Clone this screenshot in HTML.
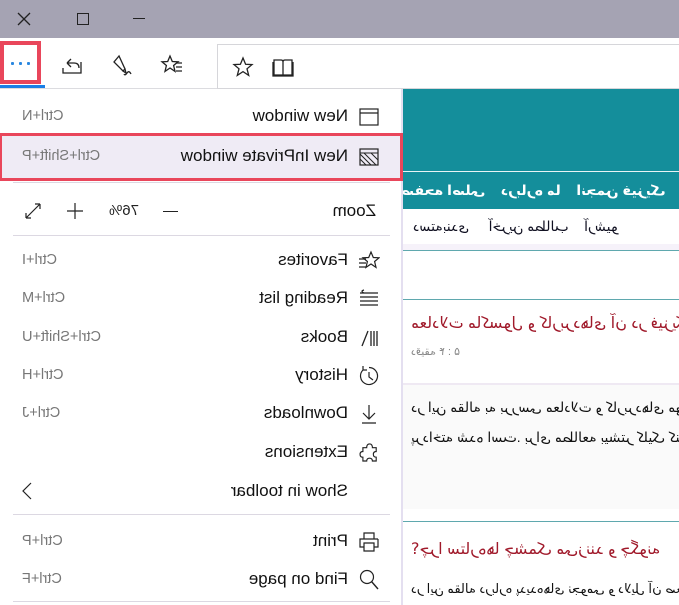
<!DOCTYPE html>
<html><head><meta charset="utf-8">
<style>
*{margin:0;padding:0;box-sizing:border-box}
html,body{width:679px;height:605px;overflow:hidden;background:#fff}
#w{position:absolute;left:0;top:0;width:679px;height:605px;transform:scaleX(-1);overflow:hidden;font-family:"Liberation Sans","DejaVu Sans",sans-serif}
.abs{position:absolute}
#title{left:0;top:0;width:679px;height:38px;background:#a5a3b3}
#tb{left:0;top:38px;width:679px;height:51px;background:#fff;border-bottom:1px solid #dcdce0}
#addr{left:0;top:44px;width:462px;height:45px;border:1px solid #d6d6da;border-left:none;background:#fff}
#content{left:0;top:89px;width:276px;height:516px;background:#fff;overflow:hidden}
#menu{left:276px;top:89px;width:403px;height:516px;background:#fff;border-left:2px solid #e4dff0}
.item{position:absolute;left:0;width:401px;height:38px}
.item .t{position:absolute;left:53px;top:10px;font-size:17px;color:#111}
.item .k{position:absolute;right:22px;top:12px;font-size:14.5px;color:#777}
.item svg{position:absolute;left:21px;top:10px}
.sep{position:absolute;left:11px;width:377px;height:1px;background:#dcd8e2}
.ar{font-family:"Liberation Sans","DejaVu Sans",sans-serif;direction:rtl;white-space:nowrap;position:absolute;right:6px}
</style></head><body>
<div id="w">
 <div id="title" class="abs">
  <div class="abs" style="left:534px;top:18px;width:12px;height:1px;background:#222"></div>
  <div class="abs" style="left:590px;top:13px;width:12px;height:12px;border:1px solid #222"></div>
  <svg class="abs" style="left:648px;top:12px" width="14" height="14"><path d="M1 1L13 13M13 1L1 13" stroke="#222" stroke-width="1.3"/></svg>
 </div>
 <div id="tb" class="abs"></div>
 <div id="addr" class="abs">
  <svg class="abs" style="left:425px;top:11px" width="22" height="22"><path d="M11 2L13.6 8.3 20 8.6 15 12.8 16.7 19.4 11 15.6 5.3 19.4 7 12.8 2 8.6 8.4 8.3Z" fill="none" stroke="#222" stroke-width="1.3"/></svg>
  <svg class="abs" style="left:385px;top:11px" width="22" height="22"><path d="M2 4H9Q11 4 11 6V19H2ZM20 4H13Q11 4 11 6V19H20ZM1 6V20H21V6" fill="none" stroke="#222" stroke-width="1.3"/></svg>
 </div>
 <svg class="abs" style="left:497px;top:54px" width="22" height="22"><path d="M12 2L14.3 7.5 20 7.8 15.6 11.5 17 17.4 12 14 7 17.4 8.4 11.5 4 7.8 9.7 7.5Z" fill="none" stroke="#222" stroke-width="1.3"/><path d="M0 9H6M0 13H6M0 17H6" stroke="#222" stroke-width="1.2"/></svg>
 <svg class="abs" style="left:546px;top:53px" width="22" height="24"><path d="M14 3L19 9 10 18 8 16ZM8 16L10 18 7 20Z M2 21Q4 17 6 20T9 21" fill="none" stroke="#222" stroke-width="1.3"/></svg>
 <svg class="abs" style="left:596px;top:54px" width="22" height="22"><path d="M16 9H9Q4 9 4 14M16 9L12 5M16 9L12 13M2 8V19H20V14" fill="none" stroke="#222" stroke-width="1.3"/></svg>
 <div class="abs" style="left:638px;top:41px;width:41px;height:43px;border:4px solid #e9465b;background:#fff"></div>
 <div class="abs" style="left:634px;top:85px;width:45px;height:3px;background:#1a7fe6"></div>
 <div class="abs" style="left:649px;top:62px;width:3px;height:3px;background:#2a87e0;border-radius:1px"></div>
 <div class="abs" style="left:657px;top:62px;width:3px;height:3px;background:#2a87e0;border-radius:1px"></div>
 <div class="abs" style="left:665px;top:62px;width:3px;height:3px;background:#2a87e0;border-radius:1px"></div>

 <div id="content" class="abs">
  <div class="abs" style="left:0;top:0;width:276px;height:82px;background:#148e9b"></div>
  <div class="abs" style="left:0;top:82px;width:276px;height:1px;background:#e8f4f5"></div>
  <div class="abs" style="left:0;top:83px;width:276px;height:37px;background:#148e9b;color:#fff;font-size:14px;font-weight:bold">
   <span class="ar" style="top:10px;right:-2px">صفحه اصلی &nbsp;&nbsp; درباره ما &nbsp;&nbsp; انجمن فیزیک &nbsp;&nbsp; تماس با ما</span>
  </div>
  <div class="abs" style="left:0;top:120px;width:276px;height:35px;font-size:14px;color:#112">
   <span class="ar" style="top:9px;right:10px">دسته‌بندی &nbsp;&nbsp;&nbsp; آخرین مطالب &nbsp;&nbsp; آرشیو</span>
  </div>
  <div class="abs" style="left:0;top:155px;width:276px;height:6px;background:#f6f2fa"></div>
  <div class="abs" style="left:0;top:161px;width:276px;height:1px;background:#5fa8ae"></div>
  <div class="abs" style="left:0;top:210px;width:276px;height:1px;background:#5fa8ae"></div>
  <div class="abs" style="left:0;top:224px;width:276px;height:40px;font-size:16px;color:#a0192a"><span class="ar" style="top:0;right:8px">معادلات ماکسول و کاربردهای آن در فیزیک</span></div>
  <div class="abs" style="left:0;top:256px;width:276px;height:20px;font-size:11px;color:#888"><span class="ar" style="top:0;right:8px">دقیقه ۴ : ۵</span></div>
  <div class="abs" style="left:0;top:294px;width:276px;height:126px;background:#fafafa;border-top:2px solid #efe9f3"></div>
  <div class="abs" style="left:0;top:310px;width:276px;font-size:14px;color:#111"><span class="ar" style="right:8px">در این مقاله به بررسی معادلات و کاربردهای مهم آنها</span></div>
  <div class="abs" style="left:0;top:340px;width:276px;font-size:14px;color:#111"><span class="ar" style="right:8px">پرداخته شده است. برای مطالعه بیشتر کلیک کنید</span></div>
  <div class="abs" style="left:0;top:432px;width:276px;height:1px;background:#5fa8ae"></div>
  <div class="abs" style="left:0;top:450px;width:276px;font-size:16px;color:#a0192a"><span class="ar" style="right:8px">؟چرا ستاره‌ها چشمک می‌زنند و چگونه</span></div>
  <div class="abs" style="left:0;top:492px;width:276px;font-size:13px;color:#111"><span class="ar" style="right:8px">در این مقاله درباره پدیده‌های نجومی و دلایل آن صحبت</span></div>
 </div>

 <div id="menu" class="abs">
  <div class="item" style="top:7px"><svg width="22" height="22"><rect x="2" y="3" width="18" height="16" fill="none" stroke="#222" stroke-width="1.2"/><path d="M2 7H20" stroke="#222" stroke-width="1.2"/></svg><span class="t">New window</span><span class="k">Ctrl+N</span></div>
  <div class="abs" style="left:-2px;top:44px;width:404px;height:48px;border:3px solid #e9465b;background:#efebf5"></div>
  <div class="item" style="top:47px"><svg width="22" height="22"><rect x="2" y="3" width="18" height="16" fill="none" stroke="#222" stroke-width="1.2"/><path d="M2 7H20M4 19L16 7M9 19L20 8M2 14L9 7M14 19L20 13" stroke="#222" stroke-width="1"/></svg><span class="t">New InPrivate window</span><span class="k">Ctrl+Shift+P</span></div>
  <div class="sep" style="top:93px"></div>
  <div class="item" style="top:102px"><span class="t" style="left:25px">Zoom</span>
   <div class="abs" style="left:223px;top:20px;width:15px;height:1px;background:#222"></div>
   <span class="abs" style="left:262px;top:11px;font-size:15px;color:#222">76%</span>
   <svg class="abs" style="left:317px;top:11px" width="18" height="18"><path d="M9 1V17M1 9H17" stroke="#222" stroke-width="1.2"/></svg>
   <svg class="abs" style="left:359px;top:11px" width="18" height="18"><path d="M2 2L16 16M2 2H7M2 2V7M16 16H11M16 16V11" stroke="#222" stroke-width="1.2" fill="none"/></svg>
  </div>
  <div class="sep" style="top:146px"></div>
  <div class="item" style="top:151px"><svg width="22" height="22"><path d="M11 2L13.3 7.5 19 7.8 14.6 11.5 16 17.4 11 14 6 17.4 7.4 11.5 3 7.8 8.7 7.5Z" fill="none" stroke="#222" stroke-width="1.2" transform="translate(-2,0)"/><path d="M14 9H21M14 13H21M14 17H21" stroke="#222" stroke-width="1.2"/></svg><span class="t">Favorites</span><span class="k">Ctrl+I</span></div>
  <div class="item" style="top:189px"><svg width="22" height="22"><path d="M2 5H20M2 9H20M2 13H20M2 17H20M16 2Q20 3 16 5" stroke="#222" stroke-width="1.2" fill="none"/></svg><span class="t">Reading list</span><span class="k">Ctrl+M</span></div>
  <div class="item" style="top:228px"><svg width="22" height="22"><path d="M3 4V19M6 4V19M9 4V19M12 4L18 19" stroke="#222" stroke-width="1.3"/></svg><span class="t">Books</span><span class="k">Ctrl+Shift+U</span></div>
  <div class="item" style="top:266px"><svg width="22" height="22"><path d="M5 5A8.5 8.5 0 1 0 11 2.5M5 5V1M5 5H9M11 7V12L15 15" stroke="#222" stroke-width="1.2" fill="none" transform="translate(22,0) scale(-1,1)"/></svg><span class="t">History</span><span class="k">Ctrl+H</span></div>
  <div class="item" style="top:304px"><svg width="22" height="22"><path d="M11 2V16M5 10L11 16 17 10M4 20H18" stroke="#222" stroke-width="1.2" fill="none"/></svg><span class="t">Downloads</span><span class="k">Ctrl+J</span></div>
  <div class="item" style="top:343px"><svg width="22" height="22"><path d="M4 6H8Q8 2 11 2T14 6H18V10Q21 10 21 13T18 16V20H14Q14 17 11 17T8 20H4V16Q7 16 7 13T4 10Z" stroke="#222" stroke-width="1.2" fill="none" transform="scale(0.95)"/></svg><span class="t">Extensions</span></div>
  <div class="item" style="top:382px"><span class="t">Show in toolbar</span>
   <svg class="abs" style="left:368px;top:11px" width="12" height="18"><path d="M2 1L10 9 2 17" stroke="#222" stroke-width="1.2" fill="none"/></svg></div>
  <div class="sep" style="top:425px"></div>
  <div class="item" style="top:432px"><svg width="22" height="22"><path d="M6 8V2H16V8M2 8H20V16H16M6 16H2V8M6 12H16V20H6Z" stroke="#222" stroke-width="1.2" fill="none"/></svg><span class="t">Print</span><span class="k">Ctrl+P</span></div>
  <div class="item" style="top:470px"><svg width="22" height="22"><circle cx="13" cy="8" r="6.5" stroke="#222" stroke-width="1.2" fill="none"/><path d="M8.5 12.5L2 20" stroke="#222" stroke-width="1.4"/></svg><span class="t">Find on page</span><span class="k">Ctrl+F</span></div>
  <div class="sep" style="top:512px"></div>
 </div>
</div>
</body></html>
